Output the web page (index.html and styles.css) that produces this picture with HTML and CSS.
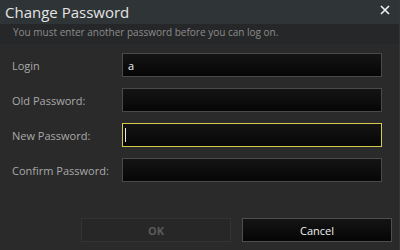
FILE: index.html
```html
<!DOCTYPE html>
<html lang="en">
<head>
    <meta charset="UTF-8">
    <title>Change Password</title>
    <link rel="stylesheet" href="styles.css">
</head>
<body>
    <div class="dialog">
        <!-- Title bar -->
        <div class="title-bar">
            <span class="title">Change Password</span>
            <svg class="close" width="10" height="10" viewBox="0 0 10 10">
                <path d="M1 1 L9 9 M9 1 L1 9" stroke="#f2f2f2" stroke-width="1.6"/>
            </svg>
        </div>
        <div class="subtitle">You must enter another password before you can log on.</div>

        <!-- Fields -->
        <div class="form">
            <div class="row">
                <label for="login">Login</label>
                <div class="field"><span class="value">a</span></div>
            </div>
            <div class="row">
                <label for="old_pw">Old Password:</label>
                <div class="field"></div>
            </div>
            <div class="row">
                <label for="new_pw">New Password:</label>
                <div class="field focused"><span class="caret"></span></div>
            </div>
            <div class="row">
                <label for="confirm_pw">Confirm Password:</label>
                <div class="field"></div>
            </div>
        </div>

        <div class="buttons">
            <button class="btn disabled">OK</button>
            <button class="btn">Cancel</button>
        </div>
    </div>
</body>
</html>
```
FILE: styles.css
```css
/* General styling */
body {
    margin: 0;
    background-color: #2a2a2a;
    font-family: 'Open Sans', 'Noto Sans', sans-serif;
}

.dialog {
    width: 400px;
    height: 250px;
    background-color: #2a2a2a;
    box-sizing: border-box;
    border-right: 1px solid #353535;
    display: flex;
    flex-direction: column;
}

.title-bar {
    height: 24px;
    background-color: #2f3437;
    display: flex;
    align-items: center;
    justify-content: space-between;
    padding: 0 9px 0 5px;
}

.title {
    color: #e4e4e4;
    font-size: 15px;
}

.close {
    margin-top: -4px;
}

.subtitle {
    height: 20px;
    background-color: #262728;
    color: #8c8c8c;
    font-size: 10px;
    padding-left: 13px;
    line-height: 17px;
}

.form {
    display: flex;
    flex-direction: column;
    gap: 11px;
    padding-top: 9px;
    padding-left: 12px;
}

.row {
    display: flex;
    align-items: center;
    height: 24px;
}

label {
    width: 110px;
    color: #a9a9a9;
    font-size: 11px;
}

.field {
    width: 260px;
    height: 24px;
    box-sizing: border-box;
    border: 1px solid #4a4a4a;
    background: linear-gradient(#141414, #060606);
    display: flex;
    align-items: center;
    padding-left: 5px;
}

.field.focused {
    border-color: #d6c84a;
    padding-left: 2px;
}

.value {
    color: #f0f0f0;
    font-size: 11px;
}

.caret {
    width: 1px;
    height: 14px;
    background-color: #e8e8e8;
}

.buttons {
    display: flex;
    justify-content: flex-end;
    gap: 11px;
    padding-right: 7px;
    margin-top: auto;
    margin-bottom: 8px;
}

.btn {
    width: 150px;
    height: 24px;
    border: 1px solid #4e4e4e;
    background: linear-gradient(#141414, #050505);
    color: #f0f0f0;
    font-family: 'Open Sans', 'Noto Sans', sans-serif;
    font-size: 11px;
}

.btn.disabled {
    background: #272727;
    border-color: #333333;
    color: #5a5a5a;
    font-weight: bold;
}
```
